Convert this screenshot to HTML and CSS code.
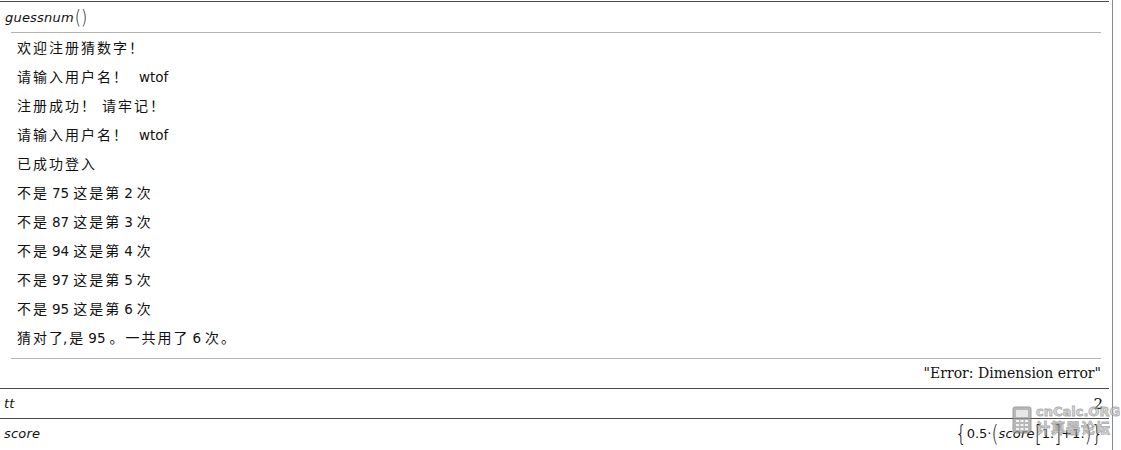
FILE: index.html
```html
<!DOCTYPE html>
<html>
<head>
<meta charset="utf-8">
<link rel="stylesheet" href="styles.css">
</head>
<body>
<div class="sheet">
  <div class="entry first">
    <div class="input"><span class="var">guessnum</span><span class="paren">()</span></div>
    <div class="output-block">
      <div class="line">欢迎注册猜数字！</div>
      <div class="line">请输入用户名！<span class="lat wide">wtof</span></div>
      <div class="line">注册成功！<span class="sp"></span>请牢记！</div>
      <div class="line">请输入用户名！<span class="lat wide">wtof</span></div>
      <div class="line">已成功登入</div>
      <div class="line">不是<span class="lat">75</span>这是第<span class="lat">2</span>次</div>
      <div class="line">不是<span class="lat">87</span>这是第<span class="lat">3</span>次</div>
      <div class="line">不是<span class="lat">94</span>这是第<span class="lat">4</span>次</div>
      <div class="line">不是<span class="lat">97</span>这是第<span class="lat">5</span>次</div>
      <div class="line">不是<span class="lat">95</span>这是第<span class="lat">6</span>次</div>
      <div class="line">猜对了<span class="lat comma">,</span>是<span class="lat">95</span>。一共用了<span class="lat">6</span>次。</div>
    </div>
    <div class="result serif">"Error: Dimension error"</div>
  </div>
  <div class="entry row">
    <span class="var">tt</span>
    <span class="serif num">2</span>
  </div>
  <div class="entry row">
    <span class="var">score</span>
    <span class="formula"><span class="big">{</span><span class="lat">0.5·</span><span class="big">(</span><span class="var">score</span><span class="big">[</span><span class="lat">1.</span><span class="big">]</span><span class="lat">+1.</span><span class="big">)</span><span class="big">}</span></span>
  </div>
  <div class="watermark">
    <svg class="wm-icon" width="20" height="28" viewBox="0 0 20 28">
      <rect x="1" y="1" width="18" height="26" rx="2" fill="#9a9a9a" stroke="#777"/>
      <rect x="4" y="4" width="12" height="7" fill="#ddd"/>
      <g fill="#eee">
        <rect x="4" y="14" width="3" height="2"/><rect x="8.5" y="14" width="3" height="2"/><rect x="13" y="14" width="3" height="2"/>
        <rect x="4" y="18" width="3" height="2"/><rect x="8.5" y="18" width="3" height="2"/><rect x="13" y="18" width="3" height="2"/>
        <rect x="4" y="22" width="3" height="2"/><rect x="8.5" y="22" width="3" height="2"/><rect x="13" y="22" width="3" height="2"/>
      </g>
    </svg>
    <div class="wm-text">
      <div class="wm-top">cnCalc.ORG</div>
      <div class="wm-bot">计算器论坛</div>
    </div>
  </div>
</div>
</body>
</html>
```

FILE: styles.css
```css
html, body {
  margin: 0;
  padding: 0;
  background: #fff;
}
body {
  width: 1121px;
  height: 450px;
  overflow: hidden;
  font-family: "Noto Sans CJK SC", "DejaVu Sans", sans-serif;
  color: #111;
}
.sheet {
  position: relative;
  width: 1113px;
  height: 450px;
  border-right: 1px solid #8a8a8a;
  padding-top: 1px;
  box-sizing: border-box;
}
.entry {
  border-top: 1px solid #4a4a4a;
  width: 1109px;
}
.input {
  height: 30px;
  display: flex;
  align-items: center;
  padding-left: 5px;
  font-size: 14px;
}
.var {
  font-family: "DejaVu Sans", sans-serif;
  font-style: italic;
  font-size: 13px;
  letter-spacing: 0.2px;
}
.paren {
  font-family: "DejaVu Sans", sans-serif;
  font-size: 16px;
  font-weight: 200;
  transform: scaleY(1.25);
  display: inline-block;
  margin-left: 1px;
}
.output-block {
  margin-left: 11px;
  width: 1090px;
  border-top: 1px solid #b4b4b4;
  border-bottom: 1px solid #b4b4b4;
  padding-bottom: 6px;
}
.line {
  height: 29px;
  line-height: 28px;
  padding-left: 6px;
  font-size: 14px;
  letter-spacing: 2px;
  white-space: nowrap;
}
.lat {
  font-family: "DejaVu Sans", sans-serif;
  font-size: 13.5px;
  letter-spacing: 0;
}
.line .lat {
  margin: 0 4px 0 3px;
}
.line .lat.wide {
  margin-left: 10px;
}
.line .lat.comma {
  margin: 0 2px 0 -2px;
}
.sp {
  display: inline-block;
  width: 5px;
}
.serif {
  font-family: "DejaVu Serif", serif;
  font-size: 14px;
}
.result {
  height: 29px;
  line-height: 29px;
  text-align: right;
  padding-right: 8px;
}
.row {
  height: 30px;
  display: flex;
  align-items: center;
  justify-content: space-between;
  padding: 0 6px 0 4px;
  box-sizing: border-box;
}
.row:last-of-type {
  border-bottom: 1px solid #4a4a4a;
}
.num {
  font-size: 15px;
}
.formula {
  display: flex;
  align-items: center;
  font-size: 14px;
}
.formula .var {
  font-size: 13px;
}
.formula .lat {
  font-size: 13px;
}
.big {
  font-family: "DejaVu Sans", sans-serif;
  font-size: 18px;
  font-weight: 200;
  transform: scaleY(1.3);
  display: inline-block;
  line-height: 1;
}
.watermark {
  position: absolute;
  left: 1012px;
  top: 405px;
  display: flex;
  align-items: center;
  gap: 4px;
  opacity: 0.7;
  white-space: nowrap;
}
.wm-text {
  display: flex;
  flex-direction: column;
  line-height: 1;
}
.wm-top {
  font-family: "DejaVu Sans", sans-serif;
  font-weight: bold;
  font-size: 13px;
  color: #c8c8c8;
  -webkit-text-stroke: 0.8px #8a8a8a;
}
.wm-bot {
  font-family: "Noto Sans CJK SC", sans-serif;
  font-weight: bold;
  font-size: 14px;
  color: #c8c8c8;
  letter-spacing: 1px;
  -webkit-text-stroke: 0.8px #8a8a8a;
  margin-top: 2px;
}
```
